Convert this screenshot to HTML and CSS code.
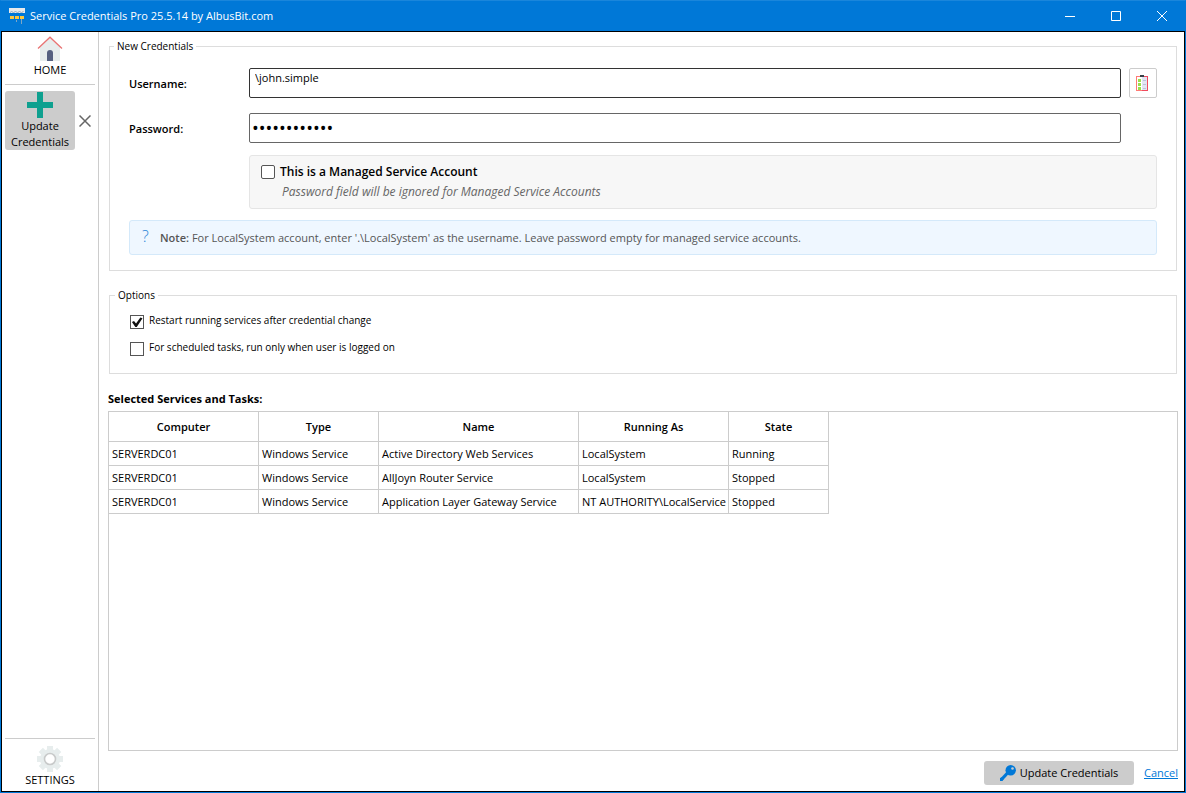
FILE: index.html
```
<!DOCTYPE html>
<html lang="en">
<head>
  <meta charset="UTF-8" />
  <meta name="viewport" content="width=device-width, initial-scale=1.0"/>
  <title>Service Credentials Pro</title>
  <link rel="stylesheet" href="styles.css">
</head>
<body>

  <header class="titlebar">
    <svg class="app-icon" width="16" height="16" viewBox="0 0 16 16">
      <path d="M0 0h16v5H0z" fill="#e8eaec"/>
      <path d="M1 4.500l1.500-1 2 1 2-1 2 1 2-1 2 1 2-1" fill="none" stroke="#8fa9c0"/>
      <path d="M1 8h4v3H1zM6 8h4v3H6zM11 8h4v3h-4z" fill="#ffc83d"/>
      <path d="M7.500 12v2M12.500 11v5" stroke="#7fa6c4"/>
    </svg>
    <h1>Service Credentials Pro 25.5.14 by AlbusBit.com</h1>
    <div class="window-buttons">
      <button aria-label="Minimize"><svg width="12" height="12" viewBox="0 0 12 12"><path d="M1 6.500h10"/></svg></button>
      <button aria-label="Maximize"><svg width="12" height="12" viewBox="0 0 12 12"><path d="M1.500 1.500h9v9h-9z"/></svg></button>
      <button aria-label="Close"><svg width="12" height="12" viewBox="0 0 12 12"><path d="M1 1l10 10M11 1L1 11"/></svg></button>
    </div>
  </header>

  <div class="window">
    <nav class="sidebar">
      <button class="nav-item home">
        <svg width="26" height="26" viewBox="0 0 26 26">
          <path d="M3 11L13 2l10 9v14H3z" fill="#e7eded"/>
          <path d="M10 25V17a3 3 0 0 1 6 0v8z" fill="#556080"/>
          <path d="M1 12.500L13 1.200l12 11.300" fill="none" stroke="#e87474" stroke-width="1.300"/>
        </svg>
        HOME
      </button>

      <div class="tab">
        <button class="tab-button">
          <svg width="26" height="26" viewBox="0 0 26 26"><path d="M10 0h6v10h10v6H16v10h-6V16H0v-6h10z" fill="#0fa08f"/></svg>
          Update Credentials
        </button>
        <button class="tab-close" aria-label="Close tab">
          <svg width="12" height="12" viewBox="0 0 12 12"><path d="M0.500 0.500l11 11M11.500 0.500l-11 11" stroke="#666" stroke-width="1.500"/></svg>
        </button>
      </div>

      <button class="nav-item settings">
        <svg width="26" height="26" viewBox="0 0 26 26">
          <circle cx="13" cy="13" r="10" fill="#e7eded"/>
          <path d="M13 0v26M0 13h26M3.800 3.800l18.400 18.400M22.200 3.800L3.800 22.200" stroke="#e7eded" stroke-width="6"/>
          <circle cx="13" cy="13" r="5.500" fill="#fff" stroke="#c8caca" stroke-width="1.600"/>
        </svg>
        SETTINGS
      </button>
    </nav>

    <main>
      <fieldset class="credentials">
        <legend>New Credentials</legend>
        <div class="field">
          <label for="username">Username:</label>
          <input class="username" type="text" id="username" value="\john.simple">
          <button class="browse" aria-label="Choose saved account">
            <svg width="14" height="16" viewBox="0 0 14 16">
              <path d="M0 1h6v15H0z" fill="#ff7a74"/>
              <path d="M6 1h6v15H6z" fill="#f04a5e"/>
              <path d="M1 2h5v13H1z" fill="#fff"/>
              <path d="M6 2h5v13H6z" fill="#e2e5f3"/>
              <path d="M2 4h3v3H2zM2 8h3v3H2zM2 12h3v3H2z" fill="#9be04c"/>
              <path d="M7 5.500h3M7 9.500h3M7 13.500h3" stroke="#bcc2dc"/>
              <path d="M4 0h4v2H4z" fill="#384047"/>
            </svg>
          </button>
        </div>
        <div class="field">
          <label for="password">Password:</label>
          <input class="password" type="password" id="password" value="xxxxxxxxxxxx">
        </div>
        <div class="managed">
          <input type="checkbox" id="managed">
          <label for="managed">This is a Managed Service Account</label>
          <p>Password field will be ignored for Managed Service Accounts</p>
        </div>
        <div class="note">
          <span class="note-icon">?</span>
          <p><b>Note:</b> For LocalSystem account, enter '.\LocalSystem' as the username. Leave password empty for managed service accounts.</p>
        </div>
      </fieldset>

      <fieldset class="options">
        <legend>Options</legend>
        <div class="option">
          <input type="checkbox" id="restart" checked>
          <label for="restart">Restart running services after credential change</label>
        </div>
        <div class="option">
          <input type="checkbox" id="loggedOn">
          <label for="loggedOn">For scheduled tasks, run only when user is logged on</label>
        </div>
      </fieldset>

      <h2>Selected Services and Tasks:</h2>
      <div class="grid">
        <table>
          <colgroup>
            <col class="col-computer"><col class="col-type"><col class="col-name"><col class="col-account"><col class="col-state">
          </colgroup>
          <thead>
            <tr><th>Computer</th><th>Type</th><th>Name</th><th>Running As</th><th>State</th></tr>
          </thead>
          <tbody>
            <tr><td>SERVERDC01</td><td>Windows Service</td><td>Active Directory Web Services</td><td>LocalSystem</td><td>Running</td></tr>
            <tr><td>SERVERDC01</td><td>Windows Service</td><td>AllJoyn Router Service</td><td>LocalSystem</td><td>Stopped</td></tr>
            <tr><td>SERVERDC01</td><td>Windows Service</td><td>Application Layer Gateway Service</td><td>NT AUTHORITY\LocalService</td><td>Stopped</td></tr>
          </tbody>
        </table>
      </div>

      <footer>
        <button class="update">
          <svg width="16" height="16" viewBox="0 0 16 16">
            <path d="M8 7.500L1.500 14.500" stroke="#0078d7" stroke-width="3.200"/>
            <path d="M0 16v-3l2.500-1L4 13.500 2.500 16z" fill="#0078d7"/>
            <circle cx="10.700" cy="5.200" r="5.200" fill="#0078d7"/>
            <circle cx="12.500" cy="3.500" r="1.300" fill="#ccc"/>
          </svg>
          Update Credentials
        </button>
        <a href="#">Cancel</a>
      </footer>
    </main>
  </div>

</body>
</html>
```
FILE: styles.css
```
* { margin: 0; padding: 0; box-sizing: border-box; }

body {
  display: flex;
  flex-direction: column;
  height: 100vh;
  background: #fff;
  border: 1px solid #0078d7;
  border-top-color: #1a86db;
  color: #000;
  font-family: 'Open Sans', 'Noto Sans', sans-serif;
  font-size: 11px;
  line-height: 16px;
}

button, input { font: inherit; color: inherit; }
button { border: none; background: none; }

.titlebar {
  display: flex;
  align-items: center;
  height: 30px;
  padding-left: 8px;
  background: #0078d7;
  color: #fff;
}

.titlebar h1 {
  flex: 1;
  margin-left: 5px;
  font-size: 11px;
  font-weight: 400;
}

.window-buttons { display: flex; height: 100%; }
.window-buttons button { width: 46px; }
.window-buttons svg { display: block; margin: auto; fill: none; stroke: #fff; }

.window {
  flex: 1;
  display: flex;
  min-height: 0;
  border: 1px solid #000;
}

.sidebar {
  display: flex;
  flex-direction: column;
  flex: none;
  width: 97px;
  padding: 0 3px;
  border-right: 1px solid #ccc;
}

.sidebar svg { display: block; margin: 0 auto; }

.nav-item {
  display: flex;
  flex-direction: column;
  align-items: center;
  height: 53px;
}

.home { padding-top: 4px; border-bottom: 1px solid #ccc; }
.settings { margin-top: auto; padding-top: 7px; border-top: 1px solid #ccc; }

.tab {
  display: flex;
  align-items: center;
  margin-top: 6px;
}

.tab-button {
  width: 70px;
  height: 59px;
  border-radius: 3px;
  background: #ccc;
}

.tab-close { width: 20px; height: 20px; }

main {
  flex: 1;
  display: flex;
  flex-direction: column;
  min-width: 0;
  padding: 7px 6px 6px 9px;
}

fieldset {
  margin: 0 1px;
  border: 1px solid #ddd;
}

legend {
  margin-left: -15px;
  padding: 0 3px;
  font-size: 10px;
  line-height: 14px;
}

.credentials {
  height: 232px;
  padding: 15px 19px;
}

.field {
  display: grid;
  grid-template-columns: 120px 1fr 28px;
  align-items: center;
  margin-bottom: 15px;
}

.field label { padding-top: 2px; font-weight: 600; }

.field input {
  height: 30px;
  margin-right: 8px;
  border: 1px solid #666;
  border-radius: 2px;
  outline: none;
}

.field .username { padding: 0 5px 12px; border-color: #333; }
.field .password { padding: 0 2px; font-size: 18px; }

.browse {
  height: 30px;
  border: 1px solid #ccc;
  border-radius: 2px;
}

.browse svg { display: block; margin: auto; }

input[type="checkbox"] {
  appearance: none;
  width: 14px;
  height: 14px;
  border: 1px solid #555;
  background: #fff;
}

input[type="checkbox"]:checked::before {
  content: "";
  display: block;
  width: 12px;
  height: 12px;
  background: #111;
  clip-path: polygon(8% 50%, 25% 42%, 42% 62%, 78% 12%, 96% 18%, 48% 92%, 36% 92%);
}

.managed {
  display: grid;
  grid-template-columns: 14px 1fr;
  column-gap: 5px;
  row-gap: 3px;
  align-items: center;
  height: 54px;
  margin: -3px 0 11px 120px;
  padding: 8px 11px;
  border: 1px solid #e5e5e5;
  border-radius: 3px;
  background: #f7f7f7;
  font-size: 12px;
}

.managed input[type="checkbox"] { border-radius: 2px; }
.managed label { font-weight: 600; }

.managed p {
  grid-column: 1 / 3;
  padding-left: 21px;
  color: #666;
  font-style: italic;
}

.note {
  display: flex;
  align-items: center;
  height: 35px;
  padding: 0 12px;
  border: 1px solid #d4e9fa;
  border-radius: 3px;
  background: #eff7ff;
  color: #555;
}

.note-icon {
  width: 18px;
  padding-bottom: 4px;
  color: #2a86d8;
  font-size: 16px;
  font-weight: 300;
}

.note b { font-weight: 600; }

.options {
  height: 86px;
  margin-top: 17px;
  padding: 12px 20px;
  font-size: 10px;
}

.option {
  display: flex;
  gap: 5px;
  height: 27px;
}

.option input { margin-top: 1px; }
.option label { line-height: 12px; }

h2 {
  margin: 17px 0 4px;
  font-size: 11px;
  font-weight: 700;
}

.grid {
  flex: 1;
  min-height: 0;
  border: 1px solid #ccc;
}

table {
  width: 720px;
  table-layout: fixed;
  border-spacing: 0;
}

.col-computer, .col-account { width: 150px; }
.col-type { width: 120px; }
.col-name { width: 200px; }
.col-state { width: 100px; }

th, td {
  height: 24px;
  border-right: 1px solid #ccc;
  border-bottom: 1px solid #ccc;
  overflow: hidden;
  white-space: nowrap;
}

th { height: 30px; font-weight: 600; }
td { padding-left: 3px; }

footer {
  display: flex;
  justify-content: flex-end;
  align-items: center;
  gap: 10px;
  margin-top: 10px;
}

.update {
  display: flex;
  justify-content: center;
  align-items: center;
  gap: 4px;
  width: 150px;
  height: 24px;
  border-radius: 3px;
  background: #ccc;
}

footer a { color: #0078d7; }
```
